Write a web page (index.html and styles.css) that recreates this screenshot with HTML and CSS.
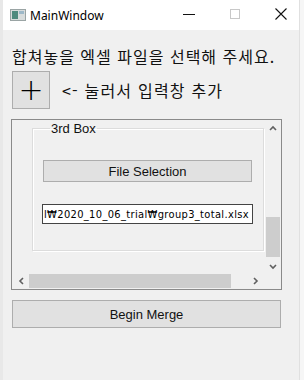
FILE: index.html
```html
<!DOCTYPE html>
<html lang="ko">
<head>
    <meta charset="UTF-8">
    <title>MainWindow</title>
    <link rel="stylesheet" href="styles.css">
</head>
<body>
    <div class="desktop-left"></div>

    <!-- Main Window -->
    <div class="window">
        <div class="titlebar">
            <svg class="app-icon" width="16" height="12" viewBox="0 0 16 12">
                <rect x="0.5" y="0.5" width="15" height="11" fill="#d8dcdc" stroke="#9aa4a4"/>
                <rect x="2" y="2" width="6" height="8" fill="#4f8a7e"/>
                <rect x="9" y="2" width="5" height="3" fill="#9db8c8"/>
            </svg>
            <span class="title">MainWindow</span>
            <div class="caption-buttons">
                <svg width="12" height="12" viewBox="0 0 12 12"><line x1="0" y1="6.5" x2="12" y2="6.5" stroke="#111" stroke-width="1"/></svg>
                <svg width="12" height="12" viewBox="0 0 12 12"><rect x="1.5" y="1.5" width="9" height="9" fill="none" stroke="#c8c8c8"/></svg>
                <svg width="12" height="12" viewBox="0 0 12 12"><path d="M0.5 0.5 L11.5 11.5 M11.5 0.5 L0.5 11.5" stroke="#111" stroke-width="1.1"/></svg>
            </div>
        </div>

        <div class="content">
            <p class="intro">합쳐놓을 엑셀 파일을 선택해 주세요.</p>

            <div class="add-row">
                <button class="add-button">+</button>
                <span class="add-hint">&lt;- 눌러서 입력창 추가</span>
            </div>

            <!-- Scroll Area -->
            <div class="scroll-area">
                <div class="viewport">
                    <fieldset class="group-box">
                        <legend>3rd Box</legend>
                        <button class="file-button">File Selection</button>
                        <input class="path-input" type="text" value="l₩2020_10_06_trial₩group3_total.xlsx">
                    </fieldset>
                </div>
                <div class="vscroll">
                    <svg class="arrow" width="8" height="6" viewBox="0 0 8 6"><path d="M1 5 L4 2 L7 5" fill="none" stroke="#606060" stroke-width="1.6"/></svg>
                    <div class="vtrack"><div class="vthumb"></div></div>
                    <svg class="arrow" width="8" height="6" viewBox="0 0 8 6"><path d="M1 1 L4 4 L7 1" fill="none" stroke="#606060" stroke-width="1.6"/></svg>
                </div>
                <div class="hscroll">
                    <svg class="arrow" width="6" height="8" viewBox="0 0 6 8"><path d="M5 1 L2 4 L5 7" fill="none" stroke="#606060" stroke-width="1.6"/></svg>
                    <div class="htrack"><div class="hthumb"></div></div>
                    <svg class="arrow" width="6" height="8" viewBox="0 0 6 8"><path d="M1 1 L4 4 L1 7" fill="none" stroke="#606060" stroke-width="1.6"/></svg>
                </div>
                <div class="corner"></div>
            </div>

            <button class="merge-button">Begin Merge</button>
        </div>
    </div>

    <div class="desktop-right"></div>
</body>
</html>
```

FILE: styles.css
```css
/* Page */
body {
    margin: 0;
    padding: 0;
    display: flex;
    height: 380px;
    overflow: hidden;
    background: #f4f4f4;
    font-family: 'Liberation Sans', 'Noto Sans CJK KR', sans-serif;
}

.desktop-left {
    width: 3px;
    background: #e8e8e8;
}

.desktop-right {
    flex: 1;
    background: #f6f6f6;
    border-left: 1px solid #e0e0e0;
}

/* Window */
.window {
    width: 296px;
    display: flex;
    flex-direction: column;
    background: #f0f0f0;
}

/* Title Bar */
.titlebar {
    height: 30px;
    background: #ffffff;
    display: flex;
    align-items: center;
}

.app-icon {
    margin-left: 7px;
    margin-top: -1px;
}

.title {
    margin-left: 4px;
    font-size: 12px;
    color: #000;
    font-family: 'Noto Sans', sans-serif;
}

.caption-buttons {
    margin-left: auto;
    display: flex;
    gap: 34px;
    margin-right: 12px;
    margin-top: -2px;
}

/* Content */
.content {
    padding: 0 0 0 8px;
    display: flex;
    flex-direction: column;
}

.intro {
    margin: 14px 0 0 1px;
    font-family: 'Noto Sans CJK KR', sans-serif;
    font-size: 16px;
    line-height: 24px;
    letter-spacing: 1px;
    color: #111;
}

.add-row {
    display: flex;
    align-items: center;
    margin-top: 3px;
}

.add-button {
    width: 38px;
    height: 38px;
    margin-left: 1px;
    padding: 0;
    background: #e1e1e1;
    border: 1px solid #adadad;
    font-family: 'DejaVu Sans', sans-serif;
    font-size: 30px;
    font-weight: 300;
    line-height: 30px;
    color: #000;
}

.add-hint {
    margin-left: 12px;
    font-family: 'Noto Sans CJK KR', sans-serif;
    font-size: 16px;
    letter-spacing: 1.2px;
    color: #111;
}

/* Scroll Area */
.scroll-area {
    margin-top: 10px;
    width: 269px;
    border: 1px solid #8a8a8a;
    display: grid;
    grid-template-columns: 253px 16px;
    grid-template-rows: 152px 17px;
}

.viewport {
    overflow: hidden;
    padding: 2px 0 0 20px;
}

/* Group Box */
.group-box {
    margin: 0;
    width: 209px;
    height: 102px;
    padding: 25px 10px 0 10px;
    border: 1px solid #dcdcdc;
    box-shadow: inset 1px 1px 0 #ffffff, 1px 1px 0 #ffffff;
    display: flex;
    flex-direction: column;
}

.group-box legend {
    padding: 0 1px;
    margin-left: 7px;
    font-family: 'Liberation Sans', sans-serif;
    font-size: 13px;
    color: #111;
    line-height: 13px;
}

.file-button {
    height: 22px;
    width: 209px;
    background: #e1e1e1;
    border: 1px solid #adadad;
    font-family: 'Liberation Sans', sans-serif;
    font-size: 13px;
    color: #111;
    padding: 0;
}

.path-input {
    margin-top: 22px;
    margin-left: -1px;
    width: 211px;
    height: 20px;
    box-sizing: border-box;
    border: 1px solid #444;
    padding: 0 0 0 1px;
    font-family: 'DejaVu Sans Condensed', 'Liberation Sans Narrow', sans-serif;
    font-size: 11px;
    letter-spacing: 0.35px;
    color: #000;
    background: #fff;
    outline: none;
}

/* Scroll Bars */
.vscroll {
    background: #f0f0f0;
    display: flex;
    flex-direction: column;
    align-items: center;
    padding: 5px 0 2px 0;
}

.vtrack {
    flex: 1;
    width: 100%;
    display: flex;
    flex-direction: column;
    justify-content: flex-end;
    padding: 0 0 7px 0;
}

.vthumb {
    height: 40px;
    margin: 0 1px;
    background: #cdcdcd;
}

.hscroll {
    background: #f0f0f0;
    display: flex;
    align-items: center;
    padding: 0 6px 0 6px;
}

.htrack {
    flex: 1;
    height: 100%;
    display: flex;
    align-items: center;
    padding: 0 22px 0 5px;
}

.hthumb {
    flex: 1;
    height: 14px;
    background: #cdcdcd;
}

.corner {
    background: #f0f0f0;
}

/* Merge Button */
.merge-button {
    margin-top: 10px;
    margin-left: 1px;
    width: 269px;
    height: 28px;
    background: #e1e1e1;
    border: 1px solid #adadad;
    font-family: 'Liberation Sans', sans-serif;
    font-size: 13px;
    color: #111;
}
```
